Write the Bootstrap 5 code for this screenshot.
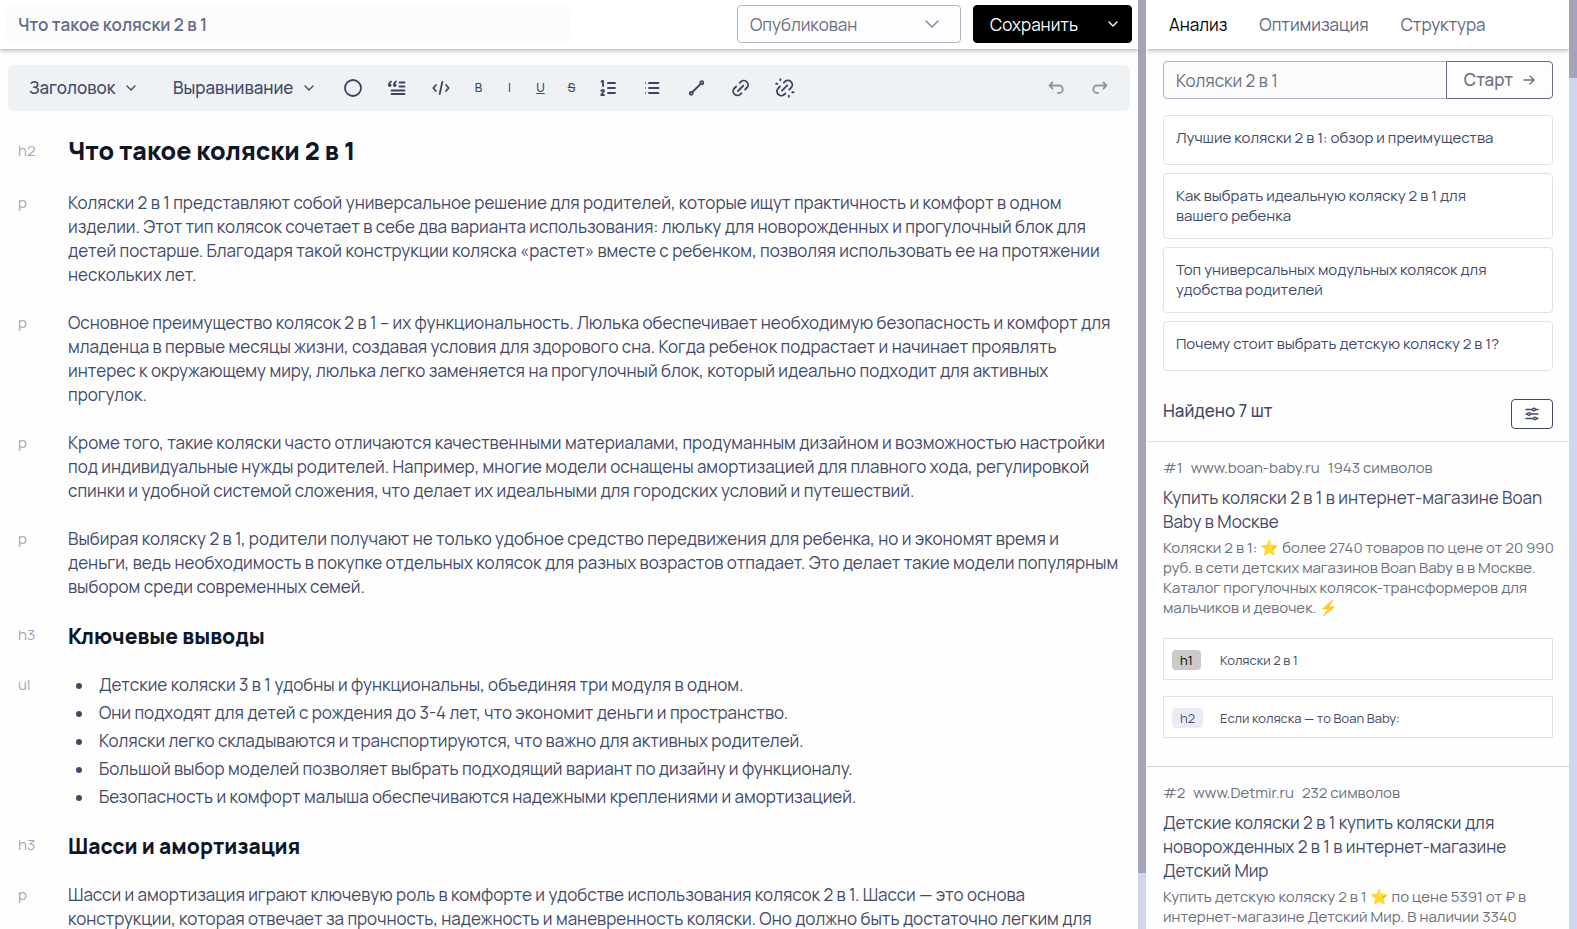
<!DOCTYPE html>
<html lang="ru">
<head>
<meta charset="utf-8">
<meta name="viewport" content="width=device-width, initial-scale=1">
<title>Что такое коляски 2 в 1</title>
<link href="https://cdn.jsdelivr.net/npm/bootstrap@5.3.0/dist/css/bootstrap.min.css" rel="stylesheet">
<style>
:root { --ink: #434968; --muted: #6b7080; --line: #e0e1e6; --thumb: #a4a3b9; --track: #d1d6f0; }
body { font-family: Manrope, Inter, "Noto Sans", sans-serif; font-size: 17px; line-height: 24px; color: var(--ink); background: #fefefe; }
svg { display: block; flex: none; fill: none; stroke: currentColor; stroke-width: 1.8; stroke-linecap: round; stroke-linejoin: round; }
.thin { stroke-width: 1.4; }
.thick { stroke-width: 2.4; }
.side-pane { flex: 0 0 422px; }
.rail { flex: 0 0 8px; background: var(--track); }
.rail-thumb { background: var(--thumb); }
.rail-main { margin-right: 1px; }
.topbar { height: 49px; padding: 5px 6px; background: #fff; box-shadow: 0 1px 5px rgba(70,70,120,.5); flex: none; }
.topbar .form-control, .topbar .form-select, .topbar .btn, .search .btn, .search .form-control { height: 38px; font-size: 17px; }
.title-box { border: 0; padding: 6px 12px; background: #fcfcfd; color: #666c86; font-weight: 600; max-width: 564px; }
.title-box:focus { background: #fcfcfd; }
.form-select.status { width: 224px; padding: 6px 12px; border-color: #b3b1c6; border-radius: 4px; color: var(--muted); background-color: #fdfdfe; background-position: right 20px center; background-size: 16px; background-image: url("data:image/svg+xml,%3Csvg xmlns='http://www.w3.org/2000/svg' viewBox='0 0 16 16'%3E%3Cpath d='M2 5l6 6 6-6' fill='none' stroke='%238583a3' stroke-width='1.5' stroke-linecap='round'/%3E%3C/svg%3E"); }
.btn-save { --bs-btn-bg: #000; --bs-btn-color: #fff; --bs-btn-border-color: #000; --bs-btn-hover-bg: #222; --bs-btn-hover-color: #fff; --bs-btn-border-radius: 4px; padding: 6px 16px; }
.btn-save.arrow { padding: 6px 12px; width: 38px; }
.toolbar { flex: none; margin: 16px 8px 0; padding: 0 8px; height: 46px; border-radius: 6px; background: #eef2f5; }
.toolbar .btn { border: 0; padding: 0; height: 32px; width: 44px; display: flex; align-items: center; justify-content: center; color: #3d4460; }
.toolbar .btn.pick { justify-content: start; gap: 10px; padding-left: 13px; font-size: 17px; font-weight: 500; color: var(--ink); width: 144px; }
.toolbar .btn.pick.wide { width: 171px; }
.toolbar .btn.letter { width: 31px; font-size: 12px; font-weight: 500; }
.toolbar .btn:disabled { color: #8d95a5; opacity: 1; }
.doc { padding: 24px 8px 0 18px; display: grid; grid-template-columns: 50px 1fr; row-gap: 24px; white-space: nowrap; }
.doc > * { margin: 0; }
.doc .kind { font-size: 15px; color: #a0a7b5; align-self: start; }
.doc h2 { font-size: 25px; line-height: 32px; font-weight: 800; color: #0f1628; }
.doc h3 { font-size: 21px; line-height: 26px; font-weight: 800; color: #0f1628; }
.doc .kind.tall { line-height: 32px; }
.doc ul { padding: 0; list-style: none; display: grid; row-gap: 4px; }
.doc li { display: flex; }
.doc li::before { content: ""; width: 6px; height: 6px; margin: 10px 17px 0 8px; border-radius: 50%; background: var(--ink); }
.side-tabs { gap: 32px; padding: 0 22px; height: 49px; }
.side-tabs .nav-link { padding: 0; color: #5f6580; }
.side-tabs .nav-link.active { color: #000; }
.search { margin: 12px 16px 16px; width: auto; }
.search .form-control { border-color: #b3b1c6; border-radius: 4px; padding: 6px 12px; color: var(--muted); background: #fcfcfd; }
.search .btn { width: 107px; border-color: #6c6a80; border-radius: 4px; color: var(--muted); font-weight: 500; gap: 10px; background: #fdfdfe; }
.hint { min-height: 50px; border: 1px solid var(--line); border-radius: 4px; padding: 12px; font-size: 15px; line-height: 20px; color: var(--ink); background: #fff; text-align: left; }
.found { padding: 28px 16px 12px; border-bottom: 1px solid var(--line); }
.btn-filter { width: 42px; height: 30px; padding: 0; border: 1px solid var(--ink); border-radius: 4px; color: var(--ink); }
.result { padding: 16px 16px 28px; border-bottom: 1px solid #cfd0d8; white-space: nowrap; }
.result .meta, .result .about { font-size: 15px; line-height: 20px; color: var(--muted); }
.result .name { font-size: 17px; line-height: 24px; font-weight: 400; margin: 8px 0 4px; }
.result .tag-list { margin-top: 20px; }
.tag-row { height: 42px; border: 1px solid var(--line); background: #fff; padding: 2px 8px 0; font-size: 13px; }
.tag-cell { width: 48px; flex: none; }
.tag-chip { display: inline-block; padding: 0 8px; line-height: 20px; border-radius: 4px; background: #e9ecf8; }
.tag-chip.main { background: #c9c9c9; color: #000; }
</style>
</head>
<body>
<div class="d-flex vh-100 overflow-hidden">
  <main class="flex-grow-1 overflow-hidden d-flex flex-column">
    <header class="topbar d-flex align-items-start">
      <input class="form-control title-box" type="text" value="Что такое коляски 2 в 1" aria-label="Название">
      <div class="d-flex ms-auto gap-2">
        <select class="form-select status me-1" aria-label="Статус"><option>Опубликован</option><option>Черновик</option></select>
        <div class="btn-group">
          <button class="btn btn-save" type="button">Сохранить</button>
          <button class="btn btn-save arrow" type="button" aria-label="Ещё"><svg class="thin" width="12" height="12" viewBox="0 0 12 12"><path d="M2 4l4 4 4-4"/></svg></button>
        </div>
      </div>
    </header>
    <div class="toolbar d-flex align-items-center" role="toolbar" aria-label="Форматирование">
      <button class="btn pick" type="button">Заголовок <svg class="thin" width="12" height="12" viewBox="0 0 12 12"><path d="M2 4l4 4 4-4"/></svg></button>
      <button class="btn pick wide" type="button">Выравнивание <svg class="thin" width="12" height="12" viewBox="0 0 12 12"><path d="M2 4l4 4 4-4"/></svg></button>
      <button class="btn" type="button" aria-label="Цвет"><svg width="20" height="20" viewBox="0 0 20 20"><circle cx="10" cy="10" r="8"/></svg></button>
      <button class="btn" type="button" aria-label="Цитата"><svg width="20" height="20" viewBox="0 0 20 20"><path d="M12.500 4.500h5M12.500 8.500h5M4.500 12.500h13M4.500 16h13"/><path d="M4 3.500q-2 .8-2 3.500M9 3.500q-2 .8-2 3.500"/><circle cx="2.800" cy="7.300" r=".8"/><circle cx="7.800" cy="7.300" r=".8"/></svg></button>
      <button class="btn" type="button" aria-label="Код"><svg width="20" height="20" viewBox="0 0 20 20"><path d="M5 7L2.300 10 5 13M15 7l2.700 3L15 13M11.300 4L8.700 16"/></svg></button>
      <button class="btn letter" type="button">B</button>
      <button class="btn letter" type="button">I</button>
      <button class="btn letter" type="button"><u>U</u></button>
      <button class="btn letter" type="button"><s>S</s></button>
      <button class="btn" type="button" aria-label="Нумерованный список"><svg width="18" height="18" viewBox="0 0 18 18"><path d="M8 4h7M8 9h7M8 14h7"/><path d="M1.500 2.500L3 1.800V7M1.200 11.800q2.800-1.800 2.800.2L1.200 16H4"/></svg></button>
      <button class="btn" type="button" aria-label="Список"><svg width="18" height="18" viewBox="0 0 18 18"><path d="M5 4h9.500M5 9h9.500M5 14h9.500"/><path class="thin" d="M1.500 4h.01M1.500 9h.01M1.500 14h.01"/></svg></button>
      <button class="btn" type="button" aria-label="Линия"><svg width="18" height="18" viewBox="0 0 18 18"><path d="M4.500 13l8-8"/><circle cx="3.200" cy="14.300" r="1.500"/><circle cx="13.800" cy="3.700" r="1.500"/></svg></button>
      <button class="btn" type="button" aria-label="Ссылка"><svg class="thick" width="18" height="18" viewBox="0 0 24 24"><path d="M8 16l7-7M10.500 5l1.500-1.500a5.300 5.300 0 0 1 7.500 8.500l-2 2M12.500 19L11 20.500A5.300 5.300 0 0 1 3.500 12l2-2"/></svg></button>
      <button class="btn" type="button" aria-label="Убрать ссылку"><svg class="thick" width="20" height="20" viewBox="0 0 26 26"><path d="M9 16.500l7-7M11.500 6L13 4.500a5.300 5.300 0 0 1 7.500 8.500l-2 2M13.500 20L12 21.500A5.300 5.300 0 0 1 4.500 13l2-2M7 1.500V3M1.500 7.500H3M18 23v1.500M22.500 18.500H24"/></svg></button>
      <button class="btn ms-auto" type="button" aria-label="Отменить" disabled><svg width="18" height="18" viewBox="0 0 18 18"><path d="M5.500 3.500l-3 3 3 3M3 6.500h9a3.700 3.700 0 0 1 0 7.500h-1"/></svg></button>
      <button class="btn" type="button" aria-label="Повторить" disabled><svg width="18" height="18" viewBox="0 0 18 18"><path d="M12.500 3.500l3 3-3 3M15 6.500H6A3.700 3.700 0 0 0 6 14h1"/></svg></button>
    </div>
    <article class="doc">
      <span class="kind tall">h2</span><h2>Что такое коляски 2 в 1</h2>
      <span class="kind">p</span>
      <p>Коляски 2 в 1 представляют собой универсальное решение для родителей, которые ищут практичность и комфорт в одном<br>изделии. Этот тип колясок сочетает в себе два варианта использования: люльку для новорожденных и прогулочный блок для<br>детей постарше. Благодаря такой конструкции коляска «растет» вместе с ребенком, позволяя использовать ее на протяжении<br>нескольких лет.</p>
      <span class="kind">p</span>
      <p>Основное преимущество колясок 2 в 1 – их функциональность. Люлька обеспечивает необходимую безопасность и комфорт для<br>младенца в первые месяцы жизни, создавая условия для здорового сна. Когда ребенок подрастает и начинает проявлять<br>интерес к окружающему миру, люлька легко заменяется на прогулочный блок, который идеально подходит для активных<br>прогулок.</p>
      <span class="kind">p</span>
      <p>Кроме того, такие коляски часто отличаются качественными материалами, продуманным дизайном и возможностью настройки<br>под индивидуальные нужды родителей. Например, многие модели оснащены амортизацией для плавного хода, регулировкой<br>спинки и удобной системой сложения, что делает их идеальными для городских условий и путешествий.</p>
      <span class="kind">p</span>
      <p>Выбирая коляску 2 в 1, родители получают не только удобное средство передвижения для ребенка, но и экономят время и<br>деньги, ведь необходимость в покупке отдельных колясок для разных возрастов отпадает. Это делает такие модели популярным<br>выбором среди современных семей.</p>
      <span class="kind">h3</span><h3>Ключевые выводы</h3>
      <span class="kind">ul</span>
      <ul>
        <li>Детские коляски 3 в 1 удобны и функциональны, объединяя три модуля в одном.</li>
        <li>Они подходят для детей с рождения до 3-4 лет, что экономит деньги и пространство.</li>
        <li>Коляски легко складываются и транспортируются, что важно для активных родителей.</li>
        <li>Большой выбор моделей позволяет выбрать подходящий вариант по дизайну и функционалу.</li>
        <li>Безопасность и комфорт малыша обеспечиваются надежными креплениями и амортизацией.</li>
      </ul>
      <span class="kind">h3</span><h3>Шасси и амортизация</h3>
      <span class="kind">p</span>
      <p>Шасси и амортизация играют ключевую роль в комфорте и удобстве использования колясок 2 в 1. Шасси — это основа<br>конструкции, которая отвечает за прочность, надежность и маневренность коляски. Оно должно быть достаточно легким для</p>
    </article>
  </main>
  <div class="rail rail-main"><div class="rail-thumb" style="height:94%"></div></div>
  <aside class="side-pane overflow-hidden">
    <nav class="topbar side-tabs nav flex-nowrap align-items-center">
      <a class="nav-link active" href="#">Анализ</a>
      <a class="nav-link" href="#">Оптимизация</a>
      <a class="nav-link" href="#">Структура</a>
    </nav>
    <div class="search input-group">
      <input class="form-control" type="text" value="Коляски 2 в 1" aria-label="Запрос">
      <button class="btn d-flex align-items-center justify-content-center" type="button">Старт <svg class="thin" width="12" height="12" viewBox="0 0 12 12"><path d="M1 6h10M7 2l4 4-4 4"/></svg></button>
    </div>
    <div class="d-grid gap-2 px-3">
      <button class="hint d-flex align-items-start" type="button"><span>Лучшие коляски 2 в 1: обзор и преимущества</span></button>
      <button class="hint d-flex align-items-start" type="button"><span>Как выбрать идеальную коляску 2 в 1 для<br>вашего ребенка</span></button>
      <button class="hint d-flex align-items-start" type="button"><span>Топ универсальных модульных колясок для<br>удобства родителей</span></button>
      <button class="hint d-flex align-items-start" type="button"><span>Почему стоит выбрать детскую коляску 2 в 1?</span></button>
    </div>
    <div class="found d-flex justify-content-between align-items-start">
      <span class="fw-medium">Найдено 7 шт</span>
      <button class="btn btn-filter d-flex align-items-center justify-content-center" type="button" aria-label="Фильтры"><svg class="thin" width="14" height="14" viewBox="0 0 14 14"><path d="M1 2.500h6.500M10.500 2.500H13M1 7h1.500M5.500 7H13M1 11.500h7.500M11.500 11.500H13"/><circle cx="9" cy="2.500" r="1.400"/><circle cx="4" cy="7" r="1.400"/><circle cx="10" cy="11.500" r="1.400"/></svg></button>
    </div>
    <section class="result">
      <div class="meta d-flex gap-2"><span>#1</span><span>www.boan-baby.ru</span><span>1943 символов</span></div>
      <h4 class="name">Купить коляски 2 в 1 в интернет-магазине Boan<br>Baby в Москве</h4>
      <div class="about">Коляски 2 в 1: ⭐ более 2740 товаров по цене от 20 990<br>руб. в сети детских магазинов Boan Baby в в Москве.<br>Каталог прогулочных колясок-трансформеров для<br>мальчиков и девочек. ⚡</div>
      <div class="tag-list d-grid gap-3">
        <div class="tag-row d-flex align-items-center"><div class="tag-cell"><span class="tag-chip main">h1</span></div>Коляски 2 в 1</div>
        <div class="tag-row d-flex align-items-center"><div class="tag-cell"><span class="tag-chip">h2</span></div>Если коляска — то Boan Baby:</div>
      </div>
    </section>
    <section class="result">
      <div class="meta d-flex gap-2"><span>#2</span><span>www.Detmir.ru</span><span>232 символов</span></div>
      <h4 class="name">Детские коляски 2 в 1 купить коляски для<br>новорожденных 2 в 1 в интернет-магазине<br>Детский Мир</h4>
      <div class="about">Купить детскую коляску 2 в 1 ⭐ по цене 5391 от ₽ в<br>интернет-магазине Детский Мир. В наличии 3340</div>
    </section>
  </aside>
  <div class="rail"><div class="rail-thumb" style="height:8.4%"></div></div>
</div>
<script src="https://cdn.jsdelivr.net/npm/bootstrap@5.3.0/dist/js/bootstrap.bundle.min.js"></script>
</body>
</html>
